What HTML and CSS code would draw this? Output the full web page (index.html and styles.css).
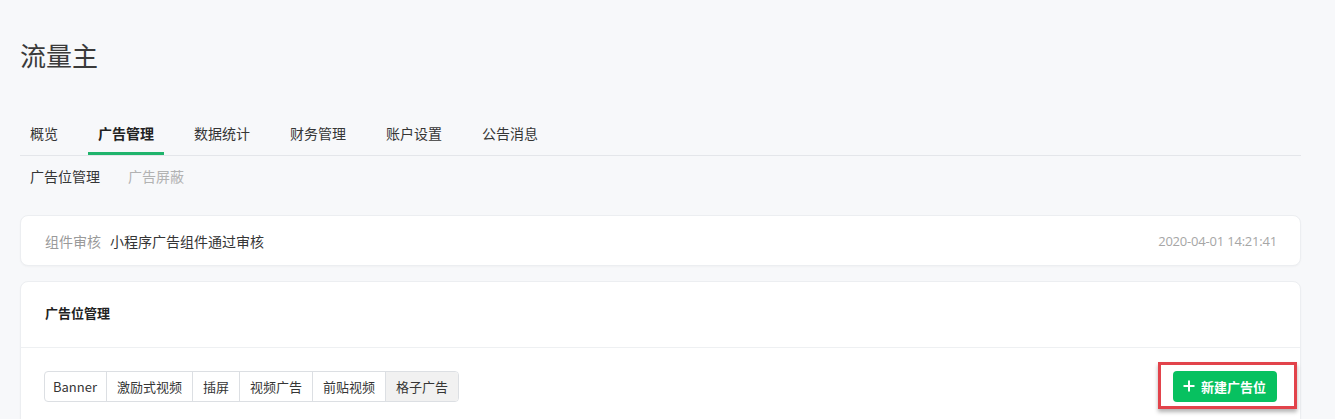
FILE: index.html
```html
<!DOCTYPE html>
<html lang="zh-CN">
<head>
<meta charset="utf-8">
<title>流量主</title>
<link rel="stylesheet" href="styles.css">
</head>
<body>
<div class="page">
  <h1 class="title">流量主</h1>
  <nav class="tabs">
    <a class="tab">概览</a>
    <a class="tab active">广告管理</a>
    <a class="tab">数据统计</a>
    <a class="tab">财务管理</a>
    <a class="tab">账户设置</a>
    <a class="tab">公告消息</a>
  </nav>
  <nav class="subtabs">
    <a class="subtab active">广告位管理</a>
    <a class="subtab">广告屏蔽</a>
  </nav>
  <section class="card notice">
    <div class="notice-main">
      <span class="notice-label">组件审核</span>
      <span class="notice-text">小程序广告组件通过审核</span>
    </div>
    <span class="notice-date">2020-04-01 14:21:41</span>
  </section>
  <section class="card panel">
    <div class="panel-head">广告位管理</div>
    <div class="panel-body">
      <div class="segments">
        <span class="seg seg-latin">Banner</span>
        <span class="seg">激励式视频</span>
        <span class="seg">插屏</span>
        <span class="seg">视频广告</span>
        <span class="seg">前贴视频</span>
        <span class="seg selected">格子广告</span>
      </div>
      <div class="btn-wrap">
        <button class="btn-primary">
          <svg class="plus" viewBox="0 0 12 12" width="12" height="12"><path d="M6 0.5V11.5M0.5 6H11.5" stroke="#fff" stroke-width="2"/></svg>
          <span>新建广告位</span>
        </button>
        <span class="highlight"></span>
      </div>
    </div>
  </section>
</div>
</body>
</html>
```
FILE: styles.css
```css
html, body {
  margin: 0;
  padding: 0;
  background: #f7f8fa;
  font-family: "Open Sans", "Noto Sans CJK SC", sans-serif;
  color: #353535;
  font-size: 14px;
}
.page {
  padding: 0 34px 0 20px;
  overflow: hidden;
  height: 419px;
}
.title {
  margin: 37px 0 0;
  font-size: 26px;
  line-height: 36px;
  font-weight: 400;
  color: #3a3a3a;
  font-family: "Noto Sans CJK SC", sans-serif;
}
.tabs {
  display: flex;
  gap: 20px;
  margin-top: 38px;
  border-bottom: 1px solid #e4e6ea;
}
.tab {
  padding: 0 10px;
  height: 44px;
  line-height: 44px;
  font-size: 14px;
  color: #353535;
  font-family: "Noto Sans CJK SC", sans-serif;
}
.tab.active {
  font-weight: 700;
  color: #222;
  box-shadow: inset 0 -3px 0 #1fb46c;
}
.subtabs {
  display: flex;
  gap: 28px;
  padding-left: 10px;
  height: 40px;
  line-height: 40px;
  font-family: "Noto Sans CJK SC", sans-serif;
}
.subtab { color: #b2b2b2; }
.subtab.active { color: #353535; }
.card {
  background: #fff;
  border: 1px solid #eceef1;
  border-radius: 8px;
  box-shadow: 0 1px 2px rgba(0,0,0,0.03);
}
.notice {
  margin-top: 19px;
  height: 49px;
  display: flex;
  align-items: center;
  justify-content: space-between;
  padding: 0 23px 0 24px;
}
.notice-main { display: flex; gap: 9px; font-family: "Noto Sans CJK SC", sans-serif; font-size: 14px; }
.notice-label { color: #9a9a9a; }
.notice-text { color: #353535; }
.notice-date { color: #a6a6a6; font-size: 13px; letter-spacing: -0.2px; }
.panel {
  margin-top: 15px;
  height: 200px;
}
.panel-head {
  height: 65px;
  line-height: 62px;
  padding: 0 24px;
  font-weight: 700;
  font-size: 13px;
  color: #222;
  border-bottom: 1px solid #eef0f2;
  font-family: "Noto Sans CJK SC", sans-serif;
}
.panel-body {
  display: flex;
  justify-content: space-between;
  align-items: center;
  padding: 22px 23px 0 23px;
}
.segments {
  display: flex;
  border: 1px solid #dcdfe3;
  border-radius: 4px;
  overflow: hidden;
  height: 29px;
  margin-top: 1px;
}
.seg {
  padding: 0 10px;
  line-height: 29px;
  font-size: 13px;
  color: #353535;
  border-left: 1px solid #dcdfe3;
  font-family: "Noto Sans CJK SC", sans-serif;
}
.seg:first-child { border-left: none; }
.seg-latin { padding: 0 9px 0 8px; }
.seg.selected { background: #f1f1f1; }
.btn-wrap { position: relative; }
.btn-primary {
  display: flex;
  align-items: center;
  gap: 6px;
  height: 31px;
  width: 104px;
  padding: 0 10px;
  border: none;
  border-radius: 4px;
  background: #07c160;
  color: #fff;
  font-weight: 700;
  font-size: 13px;
  font-family: "Noto Sans CJK SC", sans-serif;
}
.plus { flex: none; }
.highlight {
  position: absolute;
  top: -9px;
  left: -15px;
  right: -20px;
  bottom: -7px;
  border: 3px solid #e2434b;
  box-shadow: 0 3px 4px rgba(0,0,0,0.3);
  pointer-events: none;
}
```
